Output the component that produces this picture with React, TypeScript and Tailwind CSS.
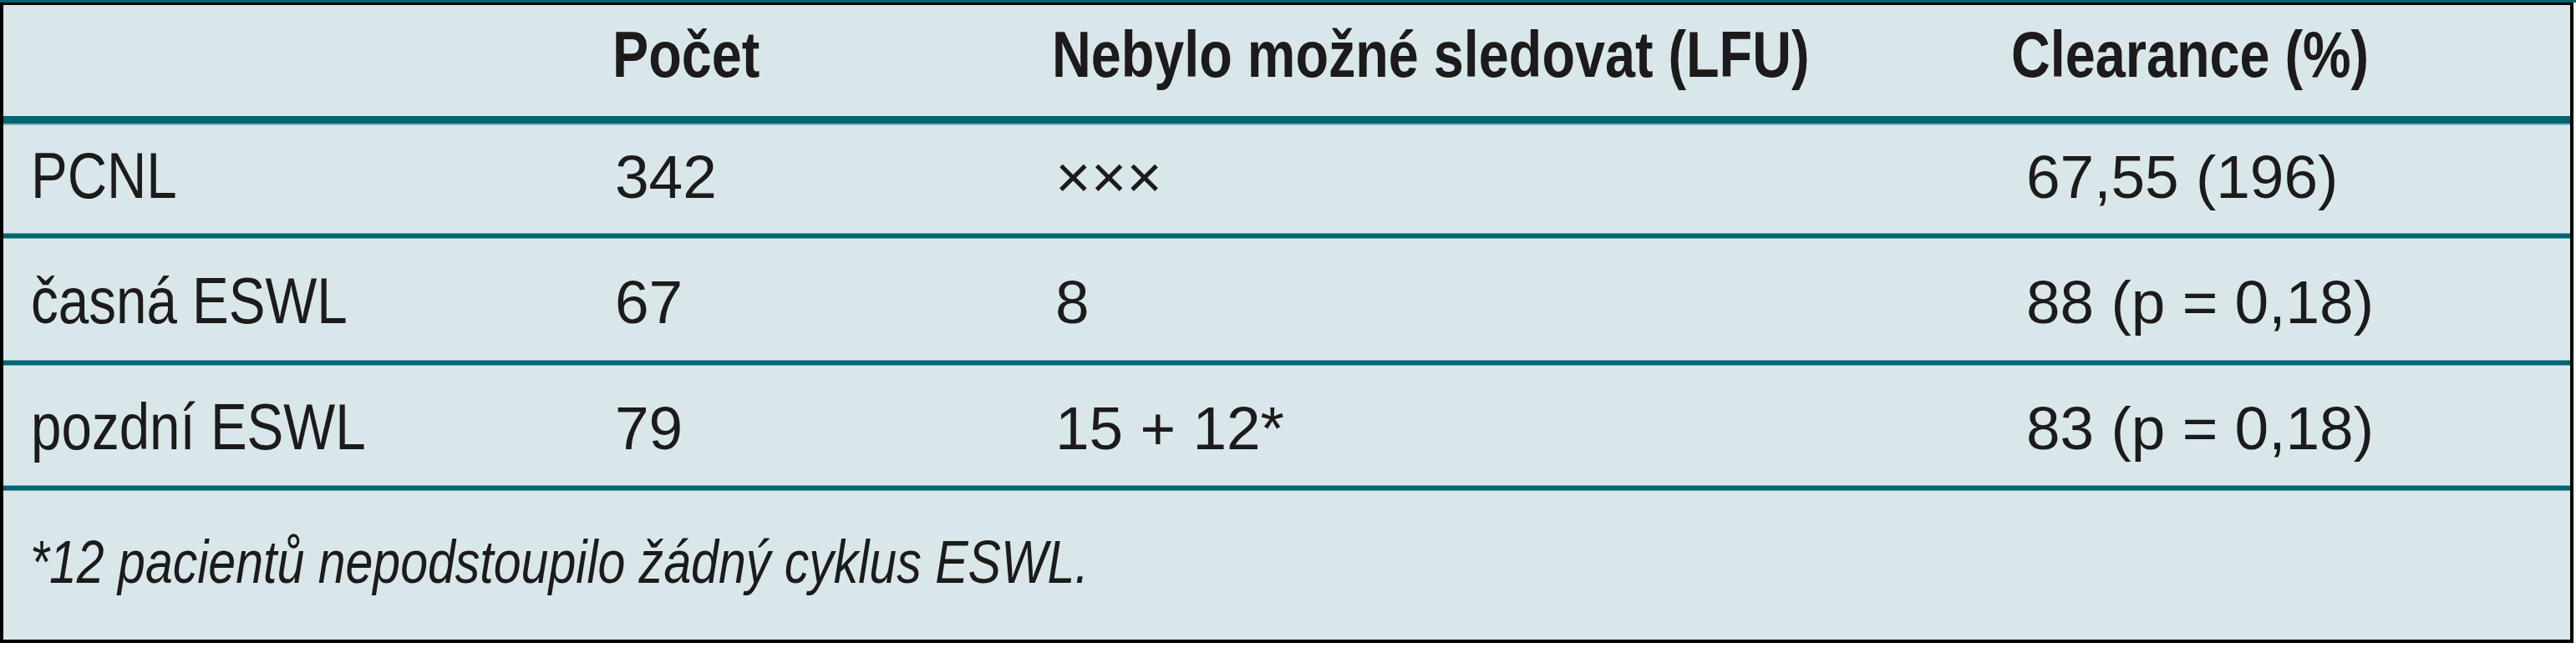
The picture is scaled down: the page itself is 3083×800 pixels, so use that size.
import React from "react";

const sans = "font-['Liberation_Sans',Arial,sans-serif]";
const cond = "inline-block origin-left scale-x-[0.83] whitespace-nowrap";

function Line({ thick }: { thick?: boolean }) {
  return thick ? (
    <div className="h-[11px] bg-[#00656f] border-b-2 border-[#7fb5bc]" />
  ) : (
    <div className="h-[7px] bg-[#00656f] border-y border-[#6aa9b1]" />
  );
}

type Row = { name: string; count: string; lfu: string; clr: string; h: string; pt: string };

const rows: Row[] = [
  { name: "PCNL", count: "342", lfu: "×××", clr: "67,55 (196)", h: "h-[129px]", pt: "pt-[21px]" },
  { name: "časná ESWL", count: "67", lfu: "8", clr: "88 (p = 0,18)", h: "h-[145px]", pt: "pt-[35px]" },
  { name: "pozdní ESWL", count: "79", lfu: "15 + 12*", clr: "83 (p = 0,18)", h: "h-[143px]", pt: "pt-[34px]" },
];

export default function App() {
  return (
    <div className={`w-[3083px] h-[800px] bg-white text-[#1c1a1b] ${sans}`}>
      <div className="h-[3px] bg-[#00656f]" />
      <div className="w-[3080px] border-t-[3px] border-x-4 border-b-4 border-black bg-[#d9e7ea]">
        <div className="h-[133px] pt-[20px] grid grid-cols-[729px_526px_1148px_1fr] items-baseline font-bold text-[78px] leading-none">
          <div className="pl-[30px]"></div>
          <div><span className={cond}>Počet</span></div>
          <div><span className={cond}>Nebylo možné sledovat (LFU)</span></div>
          <div><span className={cond}>Clearance (%)</span></div>
        </div>
        <Line thick />
        {rows.map((r) => (
          <React.Fragment key={r.name}>
            <div className={`${r.h} ${r.pt} grid grid-cols-[729px_526px_1148px_1fr] items-baseline leading-none`}>
              <div className="pl-[33px] text-[78px]">
                <span className="inline-block origin-left scale-x-[0.84] whitespace-nowrap">{r.name}</span>
              </div>
              <div className="text-[73px] pl-[3px]">{r.count}</div>
              <div className="text-[73px] pl-[4px]">{r.lfu}</div>
              <div className="text-[73px] pl-[18px]">{r.clr}</div>
            </div>
            <Line />
          </React.Fragment>
        ))}
        <div className="h-[178px] pt-[49px] pl-[32px] italic text-[72px] leading-none">
          <span className="inline-block origin-left scale-x-[0.82] whitespace-nowrap">*12 pacientů nepodstoupilo žádný cyklus ESWL.</span>
        </div>
      </div>
    </div>
  );
}
